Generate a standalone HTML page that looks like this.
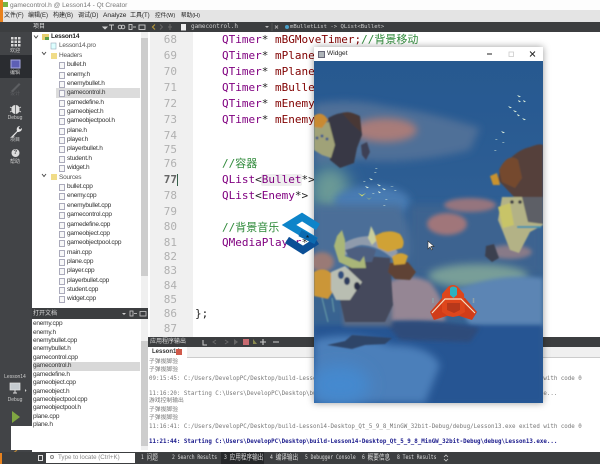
<!DOCTYPE html>
<html><head><meta charset="utf-8"><style>
html,body{margin:0;padding:0;background:#fff}
#p{position:relative;width:600px;height:464px;overflow:hidden;background:#fff;font-family:"Liberation Sans","Noto Sans CJK SC",sans-serif;filter:blur(.3px)}
.b{position:absolute}
.t{position:absolute;white-space:pre;line-height:10px;height:10px}
.tree .t,.docs .t{font-size:6.5px;letter-spacing:-.22px;color:#333}
.ln{position:absolute;left:150px;width:27px;text-align:right;font:11px/10px "DejaVu Sans Mono",monospace;color:#b0b0b0}
.c{position:absolute;left:222px;white-space:pre;font:11px/12px "DejaVu Sans Mono","Noto Sans CJK SC",monospace;color:#800000}
.c i{font-style:normal;color:#800080}.c u{text-decoration:none;color:#222}.c s{text-decoration:none;color:#2f8a3a}
.o{position:absolute;left:149px;white-space:pre;font:5.8px/8px "DejaVu Sans Mono","Noto Sans CJK SC",monospace;color:#777}
.s{position:absolute;top:453px;height:10px;white-space:pre;font:6px/10px "DejaVu Sans Mono","Noto Sans CJK SC",monospace;color:#ddd;transform:scaleX(.78);transform-origin:0 0}
.s b{font:7.200px/1 "Noto Sans CJK SC",sans-serif;vertical-align:-.5px}
.f{position:absolute;left:59px;width:4px;height:5px;background:#f8f8f8;border:1px solid #aab}
.sb{position:absolute;left:15px;transform:translateX(-50%);font-size:5px;line-height:7px;color:#ccc;white-space:pre}
</style></head><body><div id="p">

<!-- title + menu -->
<div class="b" style="left:0;top:0;width:600px;height:10px;background:#fdfdfd"></div>
<div class="b" style="left:0;top:10px;width:600px;height:12px;background:#e4e4e4"></div>
<div class="b" style="left:0;top:0;width:3px;height:28px;background:#e8821e"></div>
<div class="b" style="left:3px;top:2px;width:5px;height:5px;background:#79b543"></div>
<div class="t" style="left:10px;top:1px;font-size:6.6px;color:#777">gamecontrol.h @ Lesson14 - Qt Creator</div>
<div class="t" style="left:4px;top:11px;font-size:6px;color:#222">文件(F)</div>
<div class="t" style="left:28px;top:11px;font-size:6px;color:#222">编辑(E)</div>
<div class="t" style="left:53px;top:11px;font-size:6px;color:#222">构建(B)</div>
<div class="t" style="left:78px;top:11px;font-size:6px;color:#222">调试(D)</div>
<div class="t" style="left:103px;top:11px;font-size:6.6px;color:#222">Analyze</div>
<div class="t" style="left:130px;top:11px;font-size:6px;color:#222">工具(T)</div>
<div class="t" style="left:155px;top:11px;font-size:5.6px;color:#222">控件(W)</div>
<div class="t" style="left:181px;top:11px;font-size:5.6px;color:#222">帮助(H)</div>

<!-- dark toolbars -->
<div class="b" style="left:0;top:22px;width:600px;height:10px;background:#3c3e40"></div>
<div class="t" style="left:33px;top:22px;font-size:6px;color:#ddd">项目</div>
<svg class="b" style="left:100px;top:22px" width="50" height="10"><g fill="none" stroke="#ccc" stroke-width=".9"><path d="M3 5l2 2 2-2z" fill="#ccc"/><path d="M9 3h5M11.500 3v5"/><circle cx="20" cy="5" r="1.800"/><circle cx="23" cy="5" r="1.800"/><rect x="29" y="2.500" width="3" height="5"/><path d="M33 5h3"/><rect x="39" y="3" width="6" height="4.500"/></g></svg>
<svg class="b" style="left:150px;top:22px" width="44" height="10"><path d="M5 2.500L2.500 5 5 7.500" fill="none" stroke="#b89a3a" stroke-width="1.100"/><path d="M10 2.500L12.500 5 10 7.500" fill="none" stroke="#666" stroke-width="1"/><path d="M20 2v6M18 5h4" stroke="#666" fill="none"/><rect x="31" y="2" width="5" height="6.500" fill="#eee"/></svg>
<div class="t" style="left:191px;top:22px;font:6px/10px 'DejaVu Sans Mono',monospace;color:#ccc">gamecontrol.h</div>
<svg class="b" style="left:262px;top:22px" width="22" height="10"><path d="M3 4l2 2 2-2z" fill="#bbb"/><path d="M10 1v8" stroke="#555"/><path d="M13 3.500l3 3M16 3.500l-3 3" stroke="#aaa" fill="none" stroke-width=".9"/></svg>
<div class="b" style="left:285px;top:25px;width:4px;height:4px;border-radius:50%;background:#4a9fc8"></div>
<div class="t" style="left:290px;top:22px;font:5.600px/10px 'DejaVu Sans Mono',monospace;color:#ccc">mBulletList -&gt; QList&lt;Bullet&gt;</div>

<!-- sidebar -->
<div class="b" style="left:0;top:32px;width:32px;height:421px;background:#424447"></div>
<div class="b" style="left:0;top:55px;width:32px;height:23px;background:#2a2c30"></div>
<svg class="b" style="left:0;top:32px" width="32" height="125">
 <g fill="#d8d8d8"><rect x="11" y="5" width="2.500" height="2.500"/><rect x="14.500" y="5" width="2.500" height="2.500"/><rect x="18" y="5" width="2.500" height="2.500"/><rect x="11" y="8.500" width="2.500" height="2.500"/><rect x="14.500" y="8.500" width="2.500" height="2.500"/><rect x="18" y="8.500" width="2.500" height="2.500"/><rect x="11" y="12" width="2.500" height="2.500"/><rect x="14.500" y="12" width="2.500" height="2.500"/><rect x="18" y="12" width="2.500" height="2.500"/></g>
 <rect x="11" y="28" width="9" height="8" fill="#5d5fb5" stroke="#a7a8e0"/>
 <path d="M11 59l8-8 1.500 1.500-8 8z" fill="#5d5f62"/>
 <path d="M15.500 73c-3 0-4 2-4 4.500s1.500 4.500 4 4.500 4-2 4-4.500-1-4.500-4-4.500z" fill="#ddd"/><path d="M10 75l2 1M21 75l-2 1M10 80l2-1M21 80l-2-1" stroke="#ddd" stroke-width=".8"/><path d="M15.500 73v9" stroke="#424447" stroke-width=".7"/>
 <path d="M11 105l6-6c-1-3 1-5 3-5l-1.500 2 1.500 1.500 2-1.500c0 3-2 4-4.500 4l-5.500 6z" fill="#e6e6e6"/>
 <circle cx="15.500" cy="121" r="4" fill="#ddd"/>
</svg>
<div class="t" style="left:13.500px;top:148px;font:bold 6px/10px 'Liberation Sans',sans-serif;color:#424447">?</div>
<div class="sb" style="top:47.500px">欢迎</div>
<div class="sb" style="top:69.500px">编辑</div>
<div class="sb" style="top:91px;color:#5d5f62">设计</div>
<div class="sb" style="top:115px">Debug</div>
<div class="sb" style="top:137px">项目</div>
<div class="sb" style="top:158.500px">帮助</div>
<div class="sb" style="top:374px">Lesson14</div>
<svg class="b" style="left:8px;top:382px" width="20" height="15"><rect x="2" y="1" width="10" height="7" fill="#c5cbd0" stroke="#e4e4e4" stroke-width=".7"/><path d="M5 11h4M7 8v3" stroke="#ddd"/><path d="M17 7l1.500 1.500L17 10z" fill="#ccc"/></svg>
<div class="sb" style="top:397px">Debug</div>
<svg class="b" style="left:10px;top:411px" width="12" height="12"><path d="M2 0l8 6-8 6z" fill="#80a642"/></svg>
<svg class="b" style="left:8px;top:448px" width="14" height="8"><path d="M2 8l7-6" stroke="#b5853a" stroke-width="1.200"/></svg>

<!-- project tree -->
<div class="b" style="left:32px;top:32px;width:118px;height:276px;background:#fff"></div>
<div class="b" style="left:56px;top:88px;width:84px;height:9.500px;background:#dcdcdc"></div>
<div class="b" style="left:141px;top:32px;width:7px;height:276px;background:#f0f0f0"></div>
<div class="b" style="left:141px;top:38px;width:7px;height:238px;background:#cdcdcd"></div>
<div class="tree">
<div class="t" style="left:51px;top:32px;font-weight:bold;color:#222">Lesson14</div>
<div class="t" style="left:59px;top:41px;color:#555">Lesson14.pro</div>
<div class="t" style="left:59px;top:51px;color:#555">Headers</div>
<div class="t" style="left:67px;top:60px">bullet.h</div>
<div class="t" style="left:67px;top:69.500px">enemy.h</div>
<div class="t" style="left:67px;top:79px">enemybullet.h</div>
<div class="t" style="left:67px;top:88px">gamecontrol.h</div>
<div class="t" style="left:67px;top:97.500px">gamedefine.h</div>
<div class="t" style="left:67px;top:107px">gameobject.h</div>
<div class="t" style="left:67px;top:116px">gameobjectpool.h</div>
<div class="t" style="left:67px;top:126px">plane.h</div>
<div class="t" style="left:67px;top:135px">player.h</div>
<div class="t" style="left:67px;top:144px">playerbullet.h</div>
<div class="t" style="left:67px;top:154px">student.h</div>
<div class="t" style="left:67px;top:163px">widget.h</div>
<div class="t" style="left:59px;top:172.500px;color:#555">Sources</div>
<div class="t" style="left:67px;top:182px">bullet.cpp</div>
<div class="t" style="left:67px;top:191px">enemy.cpp</div>
<div class="t" style="left:67px;top:200.500px">enemybullet.cpp</div>
<div class="t" style="left:67px;top:210px">gamecontrol.cpp</div>
<div class="t" style="left:67px;top:219.500px">gamedefine.cpp</div>
<div class="t" style="left:67px;top:229px">gameobject.cpp</div>
<div class="t" style="left:67px;top:238px">gameobjectpool.cpp</div>
<div class="t" style="left:67px;top:248px">main.cpp</div>
<div class="t" style="left:67px;top:257px">plane.cpp</div>
<div class="t" style="left:67px;top:266px">player.cpp</div>
<div class="t" style="left:67px;top:276px">playerbullet.cpp</div>
<div class="t" style="left:67px;top:285px">student.cpp</div>
<div class="t" style="left:67px;top:294px">widget.cpp</div>
</div>
<svg class="b" style="left:32px;top:32px" width="32" height="276">
 <path d="M2 3.500l2 2.500 2-2.500M10 20l2 2.500 2-2.500M10 142l2 2.500 2-2.500" fill="none" stroke="#444" stroke-width=".9"/>
 <rect x="10" y="2" width="7" height="6" fill="#e8d070"/><rect x="13" y="5" width="4" height="3" fill="#5a9e4a"/>
 <rect x="19" y="11" width="5" height="6" fill="#dff" stroke="#9ab" stroke-width=".6"/>
 <rect x="19" y="21" width="6" height="6" fill="#f0dc88"/><rect x="19" y="142" width="6" height="6" fill="#f0dc88"/>
</svg>
<div class="f" style="top:62px"></div><div class="f" style="top:71.500px"></div><div class="f" style="top:81px"></div><div class="f" style="top:90px"></div><div class="f" style="top:99.500px"></div><div class="f" style="top:109px"></div><div class="f" style="top:118px"></div><div class="f" style="top:128px"></div><div class="f" style="top:137px"></div><div class="f" style="top:146px"></div><div class="f" style="top:156px"></div><div class="f" style="top:165px"></div>
<div class="f" style="top:184px"></div><div class="f" style="top:193px"></div><div class="f" style="top:202.500px"></div><div class="f" style="top:212px"></div><div class="f" style="top:221.500px"></div><div class="f" style="top:231px"></div><div class="f" style="top:240px"></div><div class="f" style="top:250px"></div><div class="f" style="top:259px"></div><div class="f" style="top:268px"></div><div class="f" style="top:278px"></div><div class="f" style="top:287px"></div><div class="f" style="top:296px"></div>

<!-- open docs -->
<div class="b" style="left:32px;top:308px;width:116px;height:11px;background:#3c3e40"></div>
<div class="t" style="left:33px;top:309px;font-size:6px;color:#ddd">打开文档</div>
<svg class="b" style="left:118px;top:308px" width="30" height="11"><path d="M4 5l2 2 2-2z" fill="#ccc"/><rect x="12" y="3" width="3" height="5" fill="none" stroke="#ccc" stroke-width=".8"/><path d="M16 5.500h3" stroke="#ccc" stroke-width=".8"/><rect x="22" y="3.500" width="6" height="4.500" fill="none" stroke="#ccc" stroke-width=".8"/></svg>
<div class="b" style="left:32px;top:319px;width:116px;height:133px;background:#fff"></div>
<div class="b" style="left:33px;top:362px;width:107px;height:8.500px;background:#d8d8d8"></div>
<div class="b" style="left:141px;top:319px;width:7px;height:131px;background:#f0f0f0"></div>
<div class="b" style="left:141px;top:341px;width:7px;height:105px;background:#cdcdcd"></div>
<div class="docs">
<div class="t" style="left:33px;top:319px">enemy.cpp</div>
<div class="t" style="left:33px;top:327.700px">enemy.h</div>
<div class="t" style="left:33px;top:336px">enemybullet.cpp</div>
<div class="t" style="left:33px;top:344px">enemybullet.h</div>
<div class="t" style="left:33px;top:353px">gamecontrol.cpp</div>
<div class="t" style="left:33px;top:361px">gamecontrol.h</div>
<div class="t" style="left:33px;top:370px">gamedefine.h</div>
<div class="t" style="left:33px;top:378px">gameobject.cpp</div>
<div class="t" style="left:33px;top:387px">gameobject.h</div>
<div class="t" style="left:33px;top:395px">gameobjectpool.cpp</div>
<div class="t" style="left:33px;top:403px">gameobjectpool.h</div>
<div class="t" style="left:33px;top:412px">plane.cpp</div>
<div class="t" style="left:33px;top:420px">plane.h</div>
</div>
<div class="b" style="left:11px;top:426px;width:21px;height:24px;background:#fff"></div>

<!-- editor -->
<div class="b" style="left:150px;top:32px;width:43px;height:305px;background:#f0f0f0"></div>
<div class="ln" style="top:35px">68</div><div class="ln" style="top:51px">69</div><div class="ln" style="top:67px">70</div><div class="ln" style="top:83px">71</div><div class="ln" style="top:99px">72</div><div class="ln" style="top:115px">73</div><div class="ln" style="top:131px">74</div><div class="ln" style="top:145px">75</div><div class="ln" style="top:159px">76</div>
<div class="ln" style="top:175px;color:#666;font-weight:bold">77</div><div class="ln" style="top:191px">78</div><div class="ln" style="top:207px">79</div><div class="ln" style="top:222px">80</div><div class="ln" style="top:238px">81</div><div class="ln" style="top:252px">82</div><div class="ln" style="top:266px">83</div><div class="ln" style="top:281px">84</div><div class="ln" style="top:295px">85</div><div class="ln" style="top:309px">86</div><div class="ln" style="top:324px">87</div>
<div class="b" style="left:177px;top:174px;width:1px;height:12px;background:#35604a"></div>
<div class="b" style="left:261px;top:174px;width:41px;height:12px;background:#eee;border-radius:2px"></div>
<div class="c" style="top:34px"><i>QTimer</i><u>*</u> mBGMoveTimer;<s>//背景移动</s></div>
<div class="c" style="top:50px"><i>QTimer</i><u>*</u> mPlaneMoveTimer;</div>
<div class="c" style="top:66px"><i>QTimer</i><u>*</u> mPlaneShootTimer;</div>
<div class="c" style="top:82px"><i>QTimer</i><u>*</u> mBulletMoveTimer;</div>
<div class="c" style="top:98px"><i>QTimer</i><u>*</u> mEnemyMoveTimer;</div>
<div class="c" style="top:114px"><i>QTimer</i><u>*</u> mEnemyShootTimer;</div>
<div class="c" style="top:158px"><s>//容器</s></div>
<div class="c" style="top:174px"><i>QList</i><u>&lt;</u><i>Bullet</i><u>*&gt;</u></div>
<div class="c" style="top:190px"><i>QList</i><u>&lt;</u><i>Enemy</i><u>*&gt;</u></div>
<div class="c" style="top:222px"><s>//背景音乐</s></div>
<div class="c" style="top:237px"><i>QMediaPlayer</i><u>*</u></div>
<div class="c" style="top:308px;left:195px"><u>};</u></div>

<!-- output pane -->
<div class="b" style="left:148px;top:337px;width:452px;height:10px;background:#3c3e40"></div>
<div class="t" style="left:150px;top:337px;font-size:6px;color:#ddd">应用程序输出</div>
<svg class="b" style="left:200px;top:337px" width="80" height="10"><path d="M3 3v5h4" stroke="#ccc" fill="none"/><path d="M16 3L13 5l3 2M25 3l3 2-3 2" stroke="#666" fill="none"/><path d="M34 2l4 3-4 3z" fill="#666"/><rect x="43" y="2" width="6" height="6" fill="#c86a70"/><path d="M53 2l4 5h-4z" fill="#8a8a50"/><path d="M63 2v6M60 5h6M73 5h6" stroke="#ccc" stroke-width="1.100"/></svg>
<div class="b" style="left:148px;top:347px;width:452px;height:11px;background:#f0f0f0;border-bottom:1px solid #ccc;box-sizing:border-box"></div>
<div class="b" style="left:148px;top:347px;width:39px;height:11px;background:#fff"></div>
<div class="t" style="left:152px;top:347px;font:bold 6px/10px 'Liberation Sans',sans-serif;color:#333">Lesson14</div>
<div class="b" style="left:176px;top:349px;width:6px;height:6px;background:#d05a4a"></div>
<div class="o" style="top:358px">子弹拔脚验</div>
<div class="o" style="top:366px">子弹拔脚验</div>
<div class="o" style="top:375px">09:15:45: C:/Users/DevelopPC/Desktop/build-Lesson14-Desktop_Qt_5_9_8_MinGW_32bit-Debug/debug/Lesson13.exe exited with code 0</div>
<div class="o" style="top:390px">11:16:20: Starting C:\Users\DevelopPC\Desktop\build-Lesson14-Desktop_Qt_5_9_8_MinGW_32bit-Debug\debug\Lesson13.exe...</div>
<div class="o" style="top:397px">游戏控制输出</div>
<div class="o" style="top:406px">子弹拔脚验</div>
<div class="o" style="top:414px">子弹拔脚验</div>
<div class="o" style="top:423px">11:16:41: C:/Users/DevelopPC/Desktop/build-Lesson14-Desktop_Qt_5_9_8_MinGW_32bit-Debug/debug/Lesson13.exe exited with code 0</div>
<div class="o" style="top:438px;color:#1a1a8c;font-weight:bold">11:21:44: Starting C:\Users\DevelopPC\Desktop\build-Lesson14-Desktop_Qt_5_9_8_MinGW_32bit-Debug\debug\Lesson13.exe...</div>

<!-- status bar -->
<div class="b" style="left:0;top:452px;width:600px;height:12px;background:#3c3e40"></div>
<div class="b" style="left:0;top:453px;width:2px;height:11px;background:#e8821e"></div>
<div class="b" style="left:38px;top:455px;width:5px;height:6px;border:1px solid #ddd;box-sizing:border-box"></div>
<div class="b" style="left:46px;top:453px;width:89px;height:10px;background:#fff"></div>
<div class="t" style="left:58px;top:453px;font-size:6.200px;color:#888">Type to locate (Ctrl+K)</div>
<div class="b" style="left:50px;top:455px;width:4px;height:4px;border:1px solid #888;border-radius:50%;box-sizing:border-box"></div>
<div class="s" style="left:141px">1 <b>问题</b></div>
<div class="s" style="left:172px">2 Search Results</div>
<div class="b" style="left:221px;top:452px;width:43px;height:12px;background:#26282a"></div>
<div class="s" style="left:224px">3 <b>应用程序输出</b></div>
<div class="s" style="left:270px">4 <b>编译输出</b></div>
<div class="s" style="left:305px">5 Debugger Console</div>
<div class="s" style="left:362px">6 <b>概要信息</b></div>
<div class="s" style="left:397px">8 Test Results</div>
<svg class="b" style="left:442px;top:454px" width="8" height="9"><path d="M2 3l2-2 2 2M2 5l2 2 2-2" fill="none" stroke="#ccc" stroke-width=".8"/></svg>

<!-- widget window -->
<div class="b" style="left:314px;top:47px;width:229px;height:356px;box-shadow:0 0 7px rgba(0,0,0,.4)"></div>
<div class="b" style="left:314px;top:47px;width:229px;height:14px;background:#fff"></div>
<div class="b" style="left:318px;top:51px;width:5px;height:5px;background:#aeb4b8;border:.5px solid #667"></div>
<div class="t" style="left:327px;top:49px;font-size:6.600px;color:#222">Widget</div>
<svg class="b" style="left:480px;top:47px" width="63" height="14"><path d="M7 7h5" stroke="#222"/><rect x="29" y="5" width="4.500" height="4.500" fill="none" stroke="#ccc" stroke-width=".8"/><path d="M50 4.500l5 5M55 4.500l-5 5" stroke="#222" stroke-width=".9"/></svg>

<svg class="b" style="left:314px;top:61px" width="229" height="342" viewBox="314 61 229 342">
<defs>
 <linearGradient id="sky" x1="0" y1="0" x2="0" y2="1"><stop offset="0" stop-color="#27598f"/><stop offset=".12" stop-color="#285a92"/><stop offset=".45" stop-color="#2f5f94"/><stop offset=".72" stop-color="#3b6490"/><stop offset="1" stop-color="#215a9a"/></linearGradient>
 <filter id="b8" x="-40%" y="-40%" width="180%" height="180%"><feGaussianBlur stdDeviation="8"/></filter>
 <filter id="b4" x="-40%" y="-40%" width="180%" height="180%"><feGaussianBlur stdDeviation="4"/></filter>
 <filter id="b2" x="-30%" y="-30%" width="160%" height="160%"><feGaussianBlur stdDeviation="2"/></filter>
 <filter id="b1" x="-20%" y="-20%" width="140%" height="140%"><feGaussianBlur stdDeviation=".8"/></filter>
 <clipPath id="win"><rect x="314" y="61" width="229" height="342"/></clipPath>
</defs>
<g clip-path="url(#win)">
<rect x="314" y="61" width="229" height="342" fill="url(#sky)"/>
<!-- upper haze + pink -->
<path d="M314 104 Q350 98 385 106 Q430 112 480 128 L470 150 Q410 165 360 160 L314 165Z" fill="#4f7098" filter="url(#b4)"/>
<ellipse cx="385" cy="130" rx="32" ry="12" fill="#a87b79" filter="url(#b4)"/>
<!-- cloud under left rock -->
<ellipse cx="330" cy="190" rx="20" ry="24" fill="#6a9a96" filter="url(#b8)"/>
<ellipse cx="372" cy="202" rx="38" ry="16" fill="#4a7cb3" filter="url(#b4)"/>
<path d="M314 205 H400 L420 250 L400 270 L314 275Z" fill="#4b6e98" filter="url(#b4)"/>
<!-- middle band -->
<path d="M410 205 H543 V275 H410Z" fill="#3c6490" filter="url(#b4)"/>
<ellipse cx="447" cy="224" rx="20" ry="11" fill="#a0767a" filter="url(#b2)"/>
<ellipse cx="470" cy="205" rx="26" ry="7" fill="#95747e" filter="url(#b2)"/>
<ellipse cx="510" cy="252" rx="22" ry="7" fill="#887a88" filter="url(#b2)"/>
<!-- pink left -->
<ellipse cx="322" cy="262" rx="12" ry="10" fill="#9a7a76" filter="url(#b2)"/>
<!-- green + blue cloud -->
<ellipse cx="478" cy="276" rx="50" ry="12" fill="#789e98" filter="url(#b4)"/>
<path d="M455 290 Q500 272 543 278 V328 L470 328Z" fill="#5c85b4" filter="url(#b2)"/>
<!-- pink cloud right of island -->
<path d="M384 285 Q405 270 430 282 Q445 300 445 322 L384 322Z" fill="#958694" filter="url(#b2)"/>
<!-- dark band and deep blue -->
<path d="M314 325 H543 V403 H314Z" fill="#275593" filter="url(#b2)"/>
<path d="M385 322 Q430 318 480 328 L470 342 L400 340Z" fill="#2f4c7a" filter="url(#b2)"/>
<path d="M343 303 H392 V326 H343Z" fill="#5c6a86" filter="url(#b2)"/>
<path d="M314 340 Q350 330 390 345 Q430 345 440 365 L425 403 H314Z" fill="#4c7fba" filter="url(#b4)"/>
<ellipse cx="340" cy="385" rx="30" ry="20" fill="#4489cf" filter="url(#b8)"/>
<path d="M327 345 L345 341 L352 335 L392 338 L385 344 L365 345 L352 349Z" fill="#2f4568" filter="url(#b1)"/>
<g filter="url(#b1)">
<!-- left upper rock -->
<path d="M328 118 Q345 108 360 116 L362 135 L357 148 L354 163 L340 168 L330 160Z" fill="#383844"/>
<path d="M342 113 Q352 110 360 118 L361 132 L352 124Z" fill="#4a3834"/>
<path d="M314 125 L329 122 L335 145 L331 158 L322 155 L314 150Z" fill="#a0a278"/>
<path d="M314 116 Q322 110 328 120 L322 128 L314 127Z" fill="#c98a32"/>
<circle cx="322" cy="136" r="1.500" fill="#3f5a8c"/><circle cx="327" cy="139" r="1.500" fill="#3f5a8c"/><circle cx="317" cy="138" r="1.500" fill="#3f5a8c"/>
<path d="M361 145 L367 142 L370 152 L366 160 L362 155Z" fill="#3c3f55"/>
<!-- right upper rock -->
<path d="M500 170 Q515 150 530 147 Q540 143 543 145 V202 L515 198 L498 180Z" fill="#55413a"/>
<path d="M499 170 Q508 152 518 160 L522 178 L515 188 L502 182Z" fill="#744a2e"/>
<path d="M490 176 L497 173 L500 185 L493 185Z" fill="#c8922e"/>
<!-- right building -->
<path d="M502 197 L522 197 L543 197 V225 L530 232 L519 253 L510 250 L503 232 L498 220Z" fill="#b3b286"/>
<path d="M498 207 L510 203 L514 225 L503 228Z" fill="#c8c468"/>
<path d="M522 197 H543 V224 L528 222Z" fill="#5d5e66"/>
<circle cx="512" cy="202" r="1.800" fill="#3a3a44"/><circle cx="520" cy="202" r="1.800" fill="#3a3a44"/>
<path d="M517 227 H541" stroke="#3d93ad" stroke-width="2"/>
<path d="M486 246 L494 244 L499 258 L492 262 L485 256Z" fill="#3b4150"/>
<!-- big island -->
<path d="M352 255 L390 258 L393 305 L385 322 L345 322 L340 300Z" fill="#454a5c"/>
<path d="M390 263 L408 262 L416 272 L410 280 L395 279 L388 272Z" fill="#5e4334"/>
<path d="M340 246 Q352 236 372 236 Q388 240 398 252 L392 258 Q378 246 362 245 Q350 246 346 256Z" fill="#8f9bac"/>
<path d="M345 250 Q362 244 376 250 L372 262 L352 262Z" fill="#4d5f80"/>
<path d="M337 236 L342 230 L345 240 L345 256 L360 262 L364 256 L366 268 L352 268 L339 262 L334 246Z" fill="#a9b678"/>
<path d="M368 238 L371 226 L374 232 L377 240 L372 245Z" fill="#c9ce9c"/>
<path d="M375 236 Q388 228 400 234 Q406 242 402 248 L388 252 L378 248Z" fill="#d0a234"/>
<path d="M392 257 Q400 250 408 256 L405 264 L394 265Z" fill="#d0a234"/>
<path d="M314 272 Q324 266 332 274 L334 290 L328 299 L314 296Z" fill="#cb9638"/>
<path d="M331 272 L345 266 L362 282 L350 300 L336 300 L331 290Z" fill="#b9beb2"/>
<ellipse cx="341" cy="275" rx="3" ry="4" fill="#33507e"/><ellipse cx="347" cy="281" rx="3" ry="4" fill="#2f3d5e"/><ellipse cx="357" cy="286" rx="3" ry="4" fill="#2b2f45"/>
<path d="M322 298 L328 322M332 298 L334 312" stroke="#6aa0a8" stroke-width="1" fill="none"/>
</g>
<!-- plane -->
<g>
<path d="M442 298 L430 312 L434 320 L453 314 L472 320 L477 312 L465 298Z" fill="#d13c18"/>
<path d="M448 287 Q453 283 458 287 L464 294 L465 312 L458 316 L453 317 L448 316 L442 312 L442 294Z" fill="#de461c"/>
<path d="M432 313 L445 299 H461 L475 313" stroke="#f3dcc3" stroke-width="1.200" fill="none"/>
<path d="M450 288 Q453 285 457 288 L457 295 L453.500 298 L450 295Z" fill="#2bb2c0"/>
<path d="M447 303h13v7l-6 3-7-3z" fill="#b7381b"/>
<path d="M433 303v-5M473.500 303v-5" stroke="#8fa0a8" stroke-width="1.500"/>
</g>
<!-- enemy flock -->
<g fill="#d9ecda">
<path d="M517 95l4 1.500-2 .7zM518 100l3 1.500-2 .7zM523 100l3 1.500-2 .7zM508 106l4 1.500-2 .7zM513 110l4 1.500-2 .7zM517 114l3 1.500-2 .7zM522 118l4 1.500-2 .7zM501 131l4 1.500-2 .7zM495 139l3 1h-2zM502 142l3 1h-2zM494 150l3 1h-2z"/>
<path d="M375 168l3 1h-2zM374 172l3 1h-2zM369 178l4 1.500-2 .7zM363 181l3 1h-2zM365 186l4 1.500-2 .7zM377 184l4 1.500-2 .7zM382 188l4 1.500-2 .7zM378 191l3 1.500-2 .7zM390 186l4 1h-2zM394 190l3 1h-2zM372 193l3 1h-2zM385 199l3 1h-2zM383 205l3 1h-2z"/>
</g>
<path d="M358 193l4 2 4-2-4 3.500zM366 197l3 2 3-2-3 2.500z" fill="#c9d86e"/>
<path d="M428 241v8l2-2 1.500 3 1-.6-1.500-3h3z" fill="#fff" stroke="#333" stroke-width=".6"/>
</g>
</svg>

<!-- logo -->
<svg class="b" style="left:280px;top:208px" width="44" height="50" viewBox="280 208 44 50">
 <path d="M318 227 L302 217 L289 225 L316 241" fill="none" stroke="#0d84c9" stroke-width="7.500" stroke-linejoin="miter"/>
 <path d="M287 240 L303 250 L317 241" fill="none" stroke="#0b4f96" stroke-width="7.500"/>
 <path d="M300 233 L316 241" fill="none" stroke="#0c6ab0" stroke-width="7"/>
</svg>
<div class="t" style="left:306px;top:234px;font-size:8px;color:#111">*</div>

</div></body></html>
